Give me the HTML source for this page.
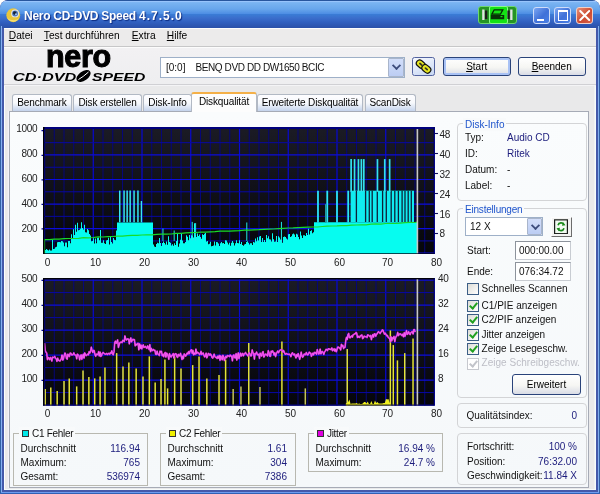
<!DOCTYPE html>
<html lang="de"><head><meta charset="utf-8"><title>Nero CD-DVD Speed 4.7.5.0</title>
<style>
*{box-sizing:border-box;margin:0;padding:0}
html,body{width:600px;height:494px;overflow:hidden;background:#fff}
body{position:relative;font-family:"Liberation Sans",sans-serif;font-size:10px;color:#111;}
#wrap{position:absolute;left:-4px;top:-4px;width:608px;height:502px;overflow:hidden;background:linear-gradient(180deg,#fff 0,#fff 14px,#3060a6 14px);filter:blur(0.4px)}
#stage{position:absolute;left:4px;top:4px;width:600px;height:494px}
.abs,.ch,.t,.al,.ar,.ax{position:absolute}
.t{white-space:nowrap;line-height:12px;height:12px}
/* window frame */
#frame{position:absolute;left:0;top:0;width:600px;height:494px;background:#4459aa;border-radius:8px 8px 0 0;overflow:hidden}
#title{position:absolute;left:0;top:0;width:600px;height:28px;border-radius:8px 8px 0 0;
 background:linear-gradient(180deg,#24508c 0,#2c5cb0 1px,#98c4fc 1.5px,#7ab4f2 2.6px,#68a6ec 9px,#4e8ee4 13.7px,#3a7cd6 14.3px,#3b6ecc 18px,#3060c0 22px,#2a50a8 28px);}
#title .cap{position:absolute;left:24px;top:8px;font:bold 12px/16px "Liberation Sans",sans-serif;color:#fff;text-shadow:1px 1px 1px #0a2a80;white-space:nowrap;letter-spacing:0.1px}
#client{position:absolute;left:3.8px;top:28px;width:592.3px;height:461.7px;background:#e9e9ea;box-shadow:inset 1px 0 0 #fbfefe,inset -1.5px -1px 0 #f6fbfb}
#menubar{position:absolute;left:0;top:0;width:592.3px;height:18px;background:#ecebeb;box-shadow:inset 0 1px 0 #fcfcfc}
#menubar span{position:absolute;top:2px;line-height:12px;font-size:10.2px;color:#000;white-space:nowrap}
#menubar u{text-decoration:underline}
#toolbar{position:absolute;left:0;top:19.3px;width:592.3px;height:37.6px;background:linear-gradient(180deg,#fcfcfc 0,#fcfcfc 1px,#f2f1f3 1.2px,#eeeef0 100%);border-bottom:1px solid #d0d0d4;box-shadow:0 1px 0 #f4f4f6}
.tbbtn{position:absolute;border-radius:3px;border:1px solid #2a437a;background:linear-gradient(180deg,#fff 0%,#f6f6f3 55%,#d9dce6 100%);text-align:center;font-size:10px;line-height:19px;color:#000}
.combo{position:absolute;background:#fff;border:1px solid #9eb0c8}
.combo .dd{position:absolute;right:0;top:0;bottom:0;width:15.5px;border-radius:1px;background:linear-gradient(180deg,#d2defa,#bccdf3);border:1px solid #a9b5cb}
.combo .dd:after{content:"";position:absolute;left:4px;top:3.2px;width:5px;height:5px;border-right:2px solid #3c4c7c;border-bottom:2px solid #3c4c7c;transform:rotate(45deg) scale(.92);transform-origin:center}
.tab{position:absolute;top:94px;height:17px;border:1px solid #b2b9c4;border-bottom:none;border-radius:3px 3px 0 0;background:linear-gradient(180deg,#fdfdff 0,#f7f9fc 50%,#c4d3ec 100%);font-size:10px;line-height:16px;text-align:center;white-space:nowrap;color:#000;letter-spacing:-0.13px}
.tab.sel{top:91.5px;height:20.5px;background:#fdfdfd;border-top:2.5px solid #f4b048;z-index:3;line-height:15px}
#page{position:absolute;left:8.9px;top:110.6px;width:580.5px;height:377.2px;border:1px solid #a6abb6;background:linear-gradient(180deg,#fafcfd,#f5f8fa);box-shadow:-1.2px 0 0 #f3f2fa}
.grp{position:absolute;border:1px solid #d3d4d6;border-radius:4px}
.gt{position:absolute;white-space:nowrap;line-height:13px;padding:0 2px;background:#f8fafb;color:#1f55cc;font-size:10px}
.al{font-size:10px;line-height:12px;width:29.3px;text-align:right;color:#222;letter-spacing:-0.3px}
.ar{font-size:10px;line-height:12px;text-align:left;color:#222;letter-spacing:-0.2px}
.ax{font-size:10px;line-height:12px;width:20px;text-align:center;color:#222}
.v{color:#1c1c7c}
.r{text-align:right}
.cb{position:absolute;width:12px;height:11.6px;border:1px solid #3c5e86;background:linear-gradient(135deg,#dcdcd7,#fff)}
.cb.on:after{content:"";position:absolute;left:3px;top:0px;width:3px;height:6px;border-right:2px solid #21a121;border-bottom:2px solid #21a121;transform:rotate(40deg)}
.cb.dis{border-color:#c6c8ce;background:#fff}
.cb.dis:after{border-color:#c2c4ca}
.edit{position:absolute;background:#fff;border:1px solid #8d939c;border-right-color:#c8ccd2;border-bottom-color:#c8ccd2;font-size:10px;line-height:17px;padding-left:3px;color:#111}
.sq{position:absolute;width:7px;height:7px;border:1px solid #333}
</style></head>
<body>
<div id="wrap"><div id="stage">
<div id="frame">
 <div id="title">
  <svg class="abs" style="left:6px;top:8px" width="14.5" height="14.5" viewBox="0 0 16 16"><circle cx="8" cy="8" r="7.6" fill="#e9c63a"/><path d="M1 10 A7.4 7.4 0 0 0 14.6 11 A8 6 0 0 1 1 10Z" fill="#f8e070"/><circle cx="10" cy="6" r="4.3" fill="#e8e8f0"/><circle cx="10" cy="6" r="3.3" fill="#5078b8"/><circle cx="9.6" cy="5.6" r="1.9" fill="#18243c"/><circle cx="11" cy="6.8" r="1" fill="#a8d0f8"/></svg>
  <div class="cap"><span style="letter-spacing:-0.28px">Nero CD-DVD Speed </span><span style="letter-spacing:1px">4.7.5.0</span></div>
  <!-- green tray tool -->
  <div class="abs" style="left:477.6px;top:6px;width:39px;height:17.5px;border-radius:3px;background:#259425;border:1px solid #6ed86e"></div>
  <div class="abs" style="left:489px;top:6px;width:18.5px;height:17.5px;border-radius:2px;background:#14e214;border:1px solid #8cf88c"></div>
  <svg class="abs" style="left:477.6px;top:6px" width="39" height="17.5" viewBox="0 0 39 17.5"><rect x="4.2" y="3.5" width="2.3" height="10.5" fill="#e4e4e4"/><rect x="7" y="4.5" width="2.3" height="8.5" fill="#1c1c1c"/><path d="M16.2 3.8h8.6l-2.4 4.4h-8.6z" fill="none" stroke="#062806" stroke-width="1.3"/><path d="M12.8 9h13.4v4.2h-13.4z" fill="#073407"/><rect x="22.5" y="10" width="2" height="1.2" fill="#14e214"/><rect x="32.2" y="3.5" width="2.3" height="10.5" fill="#e4e4e4"/><rect x="29.4" y="4.5" width="2.3" height="8.5" fill="#1c1c1c"/></svg>
  <!-- caption buttons -->
  <div class="abs" style="left:533.3px;top:6.5px;width:17.2px;height:17px;border-radius:3px;border:1px solid #cfdcf8;background:linear-gradient(135deg,#7aa6f2,#3f70d8 55%,#4a80e6)"><div class="abs" style="left:3px;top:11px;width:6.5px;height:2.4px;background:#fff"></div></div>
  <div class="abs" style="left:554.2px;top:6.5px;width:17.2px;height:17px;border-radius:3px;border:1px solid #cfdcf8;background:linear-gradient(135deg,#7aa6f2,#3f70d8 55%,#4a80e6)"><div class="abs" style="left:2.6px;top:2.3px;width:10.2px;height:10.8px;border:1px solid #fff;border-top-width:2.6px"></div></div>
  <div class="abs" style="left:575.5px;top:6.5px;width:17.4px;height:17px;border-radius:3px;border:1px solid #f0d0c8;background:linear-gradient(135deg,#e89078,#cc4a30 55%,#d86048)"><svg class="abs" style="left:0;top:0" width="15.4" height="15" viewBox="0 0 15.4 15"><path d="M3.2 3l9 9M12.2 3l-9 9" stroke="#fff" stroke-width="2" stroke-linecap="round"/></svg></div>
 </div>
 <div class="abs" style="left:0.7px;top:26px;width:1.4px;height:466px;background:#86b0f3"></div><div class="abs" style="left:0;top:26px;width:0.75px;height:468px;background:#3060a6"></div><div class="abs" style="left:597.8px;top:26px;width:1.4px;height:466px;background:#80acee"></div><div class="abs" style="left:599.2px;top:26px;width:0.8px;height:468px;background:#3060a2"></div><div class="abs" style="left:1px;top:491.7px;width:598px;height:1.6px;background:#6c9cf0"></div><div class="abs" style="left:0;top:493.3px;width:600px;height:0.7px;background:#3060b4"></div>
 <div id="client">
  <div id="menubar"><span style="left:5px"><u>D</u>atei</span><span style="left:40px"><u>T</u>est durchführen</span><span style="left:128px"><u>E</u>xtra</span><span style="left:163px"><u>H</u>ilfe</span></div>
  <div class="abs" style="left:0;top:18px;width:592.3px;height:1.3px;background:#c7c7c8"></div>
  <div id="toolbar"></div>
 </div>
</div>

<!-- logo -->
<div class="abs" style="left:45.6px;top:38px;font:bold 32px/36px 'Liberation Sans',sans-serif;color:#000;white-space:nowrap;transform-origin:0 0;transform:scaleX(0.953);-webkit-text-stroke:1.1px #000;letter-spacing:-0.3px">nero</div>
<div class="abs" style="left:12.6px;top:70.5px;font:italic bold 11px/12px 'Liberation Sans',sans-serif;color:#000;white-space:nowrap;transform-origin:0 0;transform:scaleX(1.48)">CD·DVD</div>
<svg class="abs" style="left:75px;top:69px" width="17" height="14" viewBox="0 0 17 14"><ellipse cx="8.5" cy="7" rx="8" ry="4.6" transform="rotate(-35 8.5 7)" fill="#000"/><path d="M3.5 10.5 Q8 8 13.5 3" stroke="#fff" stroke-width="1" fill="none"/></svg>
<div class="abs" style="left:91.5px;top:70.5px;font:italic bold 11px/12px 'Liberation Sans',sans-serif;color:#000;white-space:nowrap;transform-origin:0 0;transform:scaleX(1.43)">SPEED</div>

<!-- drive combo -->
<div class="combo" style="left:159.5px;top:57px;width:245px;height:21px"><div class="t" style="left:5.5px;top:3.5px">[0:0]</div><div class="t" style="left:35px;top:3.5px;letter-spacing:-0.4px">BENQ DVD DD DW1650 BCIC</div><div class="dd"></div></div>
<div class="tbbtn" style="left:412px;top:56.7px;width:23.3px;height:19.3px;border-radius:2.5px;border-color:#5363a0;background:linear-gradient(160deg,#f2f5fd 10%,#dfe8f9 50%,#c6d6f3 100%)"><svg class="abs" style="left:0;top:0" width="21.3" height="17.3" viewBox="0 0 21.3 17.3"><g transform="rotate(40 10.5 8.5)"><rect x="2.2" y="5.2" width="9.6" height="6.6" rx="3.3" fill="#e6e622" stroke="#111" stroke-width="1.2"/><rect x="5" y="7.6" width="4" height="1.8" rx="0.9" fill="#3a3a20"/><rect x="9.4" y="5.2" width="9.6" height="6.6" rx="3.3" fill="#e6e622" stroke="#111" stroke-width="1.2"/><rect x="12.2" y="7.6" width="4" height="1.8" rx="0.9" fill="#3a3a20"/></g></svg></div>
<div class="tbbtn" style="left:442.7px;top:57px;width:68px;height:19.4px;line-height:17px;box-shadow:inset 0 0 0 2px #a9c2f5"><u>S</u>tart</div>
<div class="tbbtn" style="left:517.8px;top:57px;width:67.8px;height:19.4px;line-height:17px"><u>B</u>eenden</div>

<!-- tabs -->
<div class="tab" style="left:12px;width:60px">Benchmark</div>
<div class="tab" style="left:73px;width:69px">Disk erstellen</div>
<div class="tab" style="left:143px;width:49px">Disk-Info</div>
<div class="tab sel" style="left:191px;width:66px">Diskqualität</div>
<div class="tab" style="left:257px;width:106px">Erweiterte Diskqualität</div>
<div class="tab" style="left:364.5px;width:51px">ScanDisk</div>
<div id="page"></div>

<!-- charts -->
<svg class="ch" style="left:43.0px;top:127.3px" width="391.5" height="127.10000000000001" viewBox="0 0 391.5 127.10000000000001">
<defs><linearGradient id="bg1" x1="0" y1="0" x2="0" y2="1"><stop offset="0" stop-color="#1b1b25"/><stop offset="1" stop-color="#05050a"/></linearGradient></defs>
<rect width="391.5" height="127.10000000000001" fill="url(#bg1)"/>
<line x1="1.50" y1="0" x2="1.50" y2="127.10000000000001" stroke="#0808d4" stroke-width="1.2"/><line x1="11.25" y1="0" x2="11.25" y2="127.10000000000001" stroke="#060678" stroke-width="1"/><line x1="21.00" y1="0" x2="21.00" y2="127.10000000000001" stroke="#060678" stroke-width="1"/><line x1="30.75" y1="0" x2="30.75" y2="127.10000000000001" stroke="#060678" stroke-width="1"/><line x1="40.50" y1="0" x2="40.50" y2="127.10000000000001" stroke="#060678" stroke-width="1"/><line x1="50.25" y1="0" x2="50.25" y2="127.10000000000001" stroke="#0808d4" stroke-width="1.2"/><line x1="60.00" y1="0" x2="60.00" y2="127.10000000000001" stroke="#060678" stroke-width="1"/><line x1="69.75" y1="0" x2="69.75" y2="127.10000000000001" stroke="#060678" stroke-width="1"/><line x1="79.50" y1="0" x2="79.50" y2="127.10000000000001" stroke="#060678" stroke-width="1"/><line x1="89.25" y1="0" x2="89.25" y2="127.10000000000001" stroke="#060678" stroke-width="1"/><line x1="99.00" y1="0" x2="99.00" y2="127.10000000000001" stroke="#0808d4" stroke-width="1.2"/><line x1="108.75" y1="0" x2="108.75" y2="127.10000000000001" stroke="#060678" stroke-width="1"/><line x1="118.50" y1="0" x2="118.50" y2="127.10000000000001" stroke="#060678" stroke-width="1"/><line x1="128.25" y1="0" x2="128.25" y2="127.10000000000001" stroke="#060678" stroke-width="1"/><line x1="138.00" y1="0" x2="138.00" y2="127.10000000000001" stroke="#060678" stroke-width="1"/><line x1="147.75" y1="0" x2="147.75" y2="127.10000000000001" stroke="#0808d4" stroke-width="1.2"/><line x1="157.50" y1="0" x2="157.50" y2="127.10000000000001" stroke="#060678" stroke-width="1"/><line x1="167.25" y1="0" x2="167.25" y2="127.10000000000001" stroke="#060678" stroke-width="1"/><line x1="177.00" y1="0" x2="177.00" y2="127.10000000000001" stroke="#060678" stroke-width="1"/><line x1="186.75" y1="0" x2="186.75" y2="127.10000000000001" stroke="#060678" stroke-width="1"/><line x1="196.50" y1="0" x2="196.50" y2="127.10000000000001" stroke="#0808d4" stroke-width="1.2"/><line x1="206.25" y1="0" x2="206.25" y2="127.10000000000001" stroke="#060678" stroke-width="1"/><line x1="216.00" y1="0" x2="216.00" y2="127.10000000000001" stroke="#060678" stroke-width="1"/><line x1="225.75" y1="0" x2="225.75" y2="127.10000000000001" stroke="#060678" stroke-width="1"/><line x1="235.50" y1="0" x2="235.50" y2="127.10000000000001" stroke="#060678" stroke-width="1"/><line x1="245.25" y1="0" x2="245.25" y2="127.10000000000001" stroke="#0808d4" stroke-width="1.2"/><line x1="255.00" y1="0" x2="255.00" y2="127.10000000000001" stroke="#060678" stroke-width="1"/><line x1="264.75" y1="0" x2="264.75" y2="127.10000000000001" stroke="#060678" stroke-width="1"/><line x1="274.50" y1="0" x2="274.50" y2="127.10000000000001" stroke="#060678" stroke-width="1"/><line x1="284.25" y1="0" x2="284.25" y2="127.10000000000001" stroke="#060678" stroke-width="1"/><line x1="294.00" y1="0" x2="294.00" y2="127.10000000000001" stroke="#0808d4" stroke-width="1.2"/><line x1="303.75" y1="0" x2="303.75" y2="127.10000000000001" stroke="#060678" stroke-width="1"/><line x1="313.50" y1="0" x2="313.50" y2="127.10000000000001" stroke="#060678" stroke-width="1"/><line x1="323.25" y1="0" x2="323.25" y2="127.10000000000001" stroke="#060678" stroke-width="1"/><line x1="333.00" y1="0" x2="333.00" y2="127.10000000000001" stroke="#060678" stroke-width="1"/><line x1="342.75" y1="0" x2="342.75" y2="127.10000000000001" stroke="#0808d4" stroke-width="1.2"/><line x1="352.50" y1="0" x2="352.50" y2="127.10000000000001" stroke="#060678" stroke-width="1"/><line x1="362.25" y1="0" x2="362.25" y2="127.10000000000001" stroke="#060678" stroke-width="1"/><line x1="372.00" y1="0" x2="372.00" y2="127.10000000000001" stroke="#060678" stroke-width="1"/><line x1="381.75" y1="0" x2="381.75" y2="127.10000000000001" stroke="#060678" stroke-width="1"/><line x1="391.50" y1="0" x2="391.50" y2="127.10000000000001" stroke="#0808d4" stroke-width="1.2"/><line x1="0" y1="126.20" x2="391.5" y2="126.20" stroke="#0c0cdc" stroke-width="1.2"/><line x1="0" y1="113.92" x2="391.5" y2="113.92" stroke="#0808a4" stroke-width="1"/><line x1="0" y1="101.64" x2="391.5" y2="101.64" stroke="#0c0cdc" stroke-width="1.2"/><line x1="0" y1="89.36" x2="391.5" y2="89.36" stroke="#0808a4" stroke-width="1"/><line x1="0" y1="77.08" x2="391.5" y2="77.08" stroke="#0c0cdc" stroke-width="1.2"/><line x1="0" y1="64.80" x2="391.5" y2="64.80" stroke="#0808a4" stroke-width="1"/><line x1="0" y1="52.52" x2="391.5" y2="52.52" stroke="#0c0cdc" stroke-width="1.2"/><line x1="0" y1="40.24" x2="391.5" y2="40.24" stroke="#0808a4" stroke-width="1"/><line x1="0" y1="27.96" x2="391.5" y2="27.96" stroke="#0c0cdc" stroke-width="1.2"/><line x1="0" y1="15.68" x2="391.5" y2="15.68" stroke="#0808a4" stroke-width="1"/>
<polygon fill="#06fcf0" points="0,127.10000000000001 0,126.2 1,126.2 1,126.2 2,126.2 2,122.9 3,122.9 3,122.0 4,122.0 4,122.8 5,122.8 5,123.4 6,123.4 6,122.6 7,122.6 7,123.6 8,123.6 8,123.6 9,123.6 9,112.9 10,112.9 10,122.0 11,122.0 11,121.8 12,121.8 12,120.2 13,120.2 13,119.8 14,119.8 14,115.3 15,115.3 15,115.1 16,115.1 16,115.1 17,115.1 17,115.3 18,115.3 18,113.9 19,113.9 19,114.3 20,114.3 20,115.6 21,115.6 21,119.3 22,119.3 22,115.4 23,115.4 23,115.4 24,115.4 24,120.3 25,120.3 25,114.1 26,114.1 26,114.0 27,114.0 27,116.2 28,116.2 28,107.3 29,107.3 29,111.5 30,111.5 30,102.2 31,102.2 31,107.9 32,107.9 32,97.8 33,97.8 33,104.7 34,104.7 34,95.7 35,95.7 35,103.3 36,103.3 36,102.8 37,102.8 37,101.7 38,101.7 38,95.2 39,95.2 39,101.1 40,101.1 40,102.5 41,102.5 41,97.7 42,97.7 42,105.2 43,105.2 43,105.5 44,105.5 44,102.1 45,102.1 45,103.2 46,103.2 46,106.9 47,106.9 47,108.5 48,108.5 48,114.3 49,114.3 49,114.0 50,114.0 50,111.2 51,111.2 51,116.5 52,116.5 52,111.6 53,111.6 53,116.2 54,116.2 54,110.7 55,110.7 55,110.6 56,110.6 56,113.2 57,113.2 57,103.1 58,103.1 58,115.8 59,115.8 59,115.7 60,115.7 60,113.2 61,113.2 61,116.3 62,116.3 62,117.1 63,117.1 63,113.5 64,113.5 64,113.1 65,113.1 65,110.8 66,110.8 66,117.5 67,117.5 67,108.9 68,108.9 68,114.9 69,114.9 69,116.6 70,116.6 70,111.0 71,111.0 71,112.8 72,112.8 72,113.3 73,113.3 73,103.5 74,103.5 74,95.5 75,95.5 75,95.5 76,95.5 76,95.5 77,95.5 77,95.5 78,95.5 78,95.5 79,95.5 79,95.5 80,95.5 80,95.5 81,95.5 81,95.5 82,95.5 82,95.5 83,95.5 83,95.5 84,95.5 84,95.5 85,95.5 85,95.5 86,95.5 86,95.5 87,95.5 87,95.5 88,95.5 88,95.5 89,95.5 89,95.5 90,95.5 90,95.5 91,95.5 91,95.5 92,95.5 92,95.5 93,95.5 93,95.5 94,95.5 94,95.5 95,95.5 95,95.5 96,95.5 96,95.5 97,95.5 97,95.5 98,95.5 98,95.5 99,95.5 99,95.5 100,95.5 100,95.5 101,95.5 101,95.5 102,95.5 102,95.5 103,95.5 103,95.5 104,95.5 104,95.5 105,95.5 105,95.5 106,95.5 106,95.5 107,95.5 107,95.5 108,95.5 108,95.5 109,95.5 109,95.5 110,95.5 110,117.4 111,117.4 111,119.5 112,119.5 112,119.9 113,119.9 113,117.1 114,117.1 114,115.8 115,115.8 115,116.3 116,116.3 116,111.1 117,111.1 117,115.9 118,115.9 118,119.0 119,119.0 119,116.0 120,116.0 120,114.6 121,114.6 121,116.0 122,116.0 122,117.4 123,117.4 123,114.4 124,114.4 124,117.7 125,117.7 125,109.3 126,109.3 126,114.9 127,114.9 127,115.7 128,115.7 128,118.4 129,118.4 129,117.3 130,117.3 130,118.7 131,118.7 131,116.2 132,116.2 132,118.1 133,118.1 133,114.0 134,114.0 134,105.9 135,105.9 135,119.8 136,119.8 136,116.6 137,116.6 137,112.7 138,112.7 138,106.3 139,106.3 139,113.5 140,113.5 140,116.2 141,116.2 141,116.2 142,116.2 142,115.1 143,115.1 143,108.3 144,108.3 144,109.8 145,109.8 145,113.2 146,113.2 146,108.0 147,108.0 147,111.3 148,111.3 148,108.2 149,108.2 149,108.8 150,108.8 150,110.4 151,110.4 151,96.2 152,96.2 152,108.0 153,108.0 153,110.0 154,110.0 154,106.6 155,106.6 155,109.1 156,109.1 156,107.4 157,107.4 157,109.9 158,109.9 158,111.8 159,111.8 159,107.3 160,107.3 160,108.0 161,108.0 161,106.7 162,106.7 162,106.1 163,106.1 163,114.6 164,114.6 164,113.9 165,113.9 165,117.3 166,117.3 166,116.7 167,116.7 167,114.7 168,114.7 168,119.3 169,119.3 169,119.1 170,119.1 170,118.4 171,118.4 171,114.6 172,114.6 172,118.5 173,118.5 173,115.0 174,115.0 174,115.2 175,115.2 175,116.4 176,116.4 176,118.9 177,118.9 177,116.2 178,116.2 178,115.0 179,115.0 179,116.2 180,116.2 180,116.0 181,116.0 181,117.1 182,117.1 182,113.3 183,113.3 183,113.6 184,113.6 184,115.6 185,115.6 185,117.6 186,117.6 186,115.7 187,115.7 187,118.7 188,118.7 188,115.7 189,115.7 189,113.9 190,113.9 190,115.8 191,115.8 191,118.4 192,118.4 192,116.3 193,116.3 193,113.2 194,113.2 194,115.9 195,115.9 195,116.2 196,116.2 196,113.3 197,113.3 197,116.9 198,116.9 198,115.0 199,115.0 199,118.0 200,118.0 200,118.7 201,118.7 201,117.4 202,117.4 202,116.9 203,116.9 203,115.0 204,115.0 204,114.3 205,114.3 205,115.7 206,115.7 206,117.6 207,117.6 207,116.2 208,116.2 208,116.3 209,116.3 209,117.9 210,117.9 210,115.0 211,115.0 211,115.6 212,115.6 212,111.6 213,111.6 213,114.2 214,114.2 214,110.3 215,110.3 215,113.6 216,113.6 216,109.5 217,109.5 217,109.0 218,109.0 218,114.9 219,114.9 219,110.9 220,110.9 220,115.1 221,115.1 221,112.9 222,112.9 222,114.9 223,114.9 223,108.0 224,108.0 224,111.2 225,111.2 225,109.2 226,109.2 226,112.3 227,112.3 227,112.4 228,112.4 228,114.5 229,114.5 229,106.3 230,106.3 230,112.3 231,112.3 231,114.8 232,114.8 232,114.4 233,114.4 233,109.1 234,109.1 234,115.1 235,115.1 235,109.3 236,109.3 236,110.6 237,110.6 237,112.6 238,112.6 238,112.9 239,112.9 239,115.7 240,115.7 240,110.1 241,110.1 241,109.6 242,109.6 242,110.0 243,110.0 243,111.6 244,111.6 244,112.6 245,112.6 245,107.3 246,107.3 246,106.9 247,106.9 247,110.0 248,110.0 248,109.3 249,109.3 249,107.3 250,107.3 250,106.5 251,106.5 251,107.4 252,107.4 252,110.0 253,110.0 253,106.7 254,106.7 254,107.5 255,107.5 255,110.0 256,110.0 256,112.2 257,112.2 257,104.4 258,104.4 258,108.4 259,108.4 259,111.1 260,111.1 260,108.2 261,108.2 261,108.2 262,108.2 262,109.1 263,109.1 263,105.9 264,105.9 264,108.0 265,108.0 265,101.8 266,101.8 266,107.6 267,107.6 267,104.0 268,104.0 268,103.2 269,103.2 269,106.2 270,106.2 270,105.3 271,105.3 271,95.3 272,95.3 272,95.3 273,95.3 273,95.3 274,95.3 274,95.3 275,95.3 275,95.3 276,95.3 276,95.3 277,95.3 277,95.3 278,95.3 278,95.3 279,95.3 279,95.3 280,95.3 280,95.3 281,95.3 281,95.3 282,95.3 282,95.3 283,95.3 283,95.3 284,95.3 284,95.3 285,95.3 285,95.3 286,95.3 286,95.3 287,95.3 287,95.3 288,95.3 288,95.3 289,95.3 289,95.3 290,95.3 290,95.3 291,95.3 291,95.3 292,95.3 292,95.3 293,95.3 293,95.3 294,95.3 294,95.3 295,95.3 295,95.3 296,95.3 296,95.3 297,95.3 297,95.3 298,95.3 298,95.3 299,95.3 299,95.3 300,95.3 300,95.3 301,95.3 301,95.3 302,95.3 302,95.3 303,95.3 303,95.3 304,95.3 304,95.3 305,95.3 305,95.3 306,95.3 306,95.3 307,95.3 307,95.3 308,95.3 308,95.3 309,95.3 309,95.3 310,95.3 310,95.3 311,95.3 311,95.3 312,95.3 312,95.3 313,95.3 313,95.3 314,95.3 314,95.3 315,95.3 315,95.3 316,95.3 316,95.3 317,95.3 317,95.3 318,95.3 318,95.3 319,95.3 319,95.3 320,95.3 320,95.3 321,95.3 321,95.3 322,95.3 322,95.3 323,95.3 323,95.3 324,95.3 324,95.3 325,95.3 325,95.3 326,95.3 326,95.3 327,95.3 327,95.3 328,95.3 328,95.3 329,95.3 329,95.3 330,95.3 330,95.3 331,95.3 331,95.3 332,95.3 332,95.3 333,95.3 333,95.3 334,95.3 334,95.3 335,95.3 335,95.3 336,95.3 336,95.3 337,95.3 337,95.3 338,95.3 338,95.3 339,95.3 339,95.3 340,95.3 340,95.3 341,95.3 341,95.3 342,95.3 342,95.3 343,95.3 343,95.3 344,95.3 344,95.3 345,95.3 345,95.3 346,95.3 346,95.3 347,95.3 347,95.3 348,95.3 348,95.3 349,95.3 349,95.3 350,95.3 350,95.3 351,95.3 351,95.3 352,95.3 352,95.3 353,95.3 353,95.3 354,95.3 354,95.3 355,95.3 355,95.3 356,95.3 356,95.3 357,95.3 357,95.3 358,95.3 358,95.3 359,95.3 359,95.3 360,95.3 360,95.3 361,95.3 361,95.3 362,95.3 362,95.3 363,95.3 363,95.3 364,95.3 364,95.3 365,95.3 365,95.3 366,95.3 366,95.3 367,95.3 367,95.3 368,95.3 368,95.3 369,95.3 369,95.3 370,95.3 370,95.3 371,95.3 371,95.3 372,95.3 372,95.3 373,95.3 373,95.3 374,95.3 374,127.10000000000001"/>
<line x1="76.72" y1="63.6" x2="76.72" y2="95.3" stroke="#38e6f2" stroke-width="1.5"/><line x1="81.06" y1="63.6" x2="81.06" y2="95.3" stroke="#38e6f2" stroke-width="1.5"/><line x1="84.13" y1="63.6" x2="84.13" y2="95.3" stroke="#38e6f2" stroke-width="1.5"/><line x1="87.15" y1="63.6" x2="87.15" y2="95.3" stroke="#38e6f2" stroke-width="1.5"/><line x1="91.05" y1="63.6" x2="91.05" y2="95.3" stroke="#38e6f2" stroke-width="1.5"/><line x1="94.95" y1="63.6" x2="94.95" y2="95.3" stroke="#38e6f2" stroke-width="1.5"/><line x1="98.41" y1="74.0" x2="98.41" y2="95.3" stroke="#38e6f2" stroke-width="1.4"/><line x1="203.81" y1="95.5" x2="203.81" y2="113.9" stroke="#20ecec" stroke-width="1.0"/><line x1="238.43" y1="94.9" x2="238.43" y2="113.9" stroke="#20ecec" stroke-width="1.0"/><line x1="149.21" y1="94.9" x2="149.21" y2="113.9" stroke="#20ecec" stroke-width="1.0"/><line x1="152.62" y1="96.1" x2="152.62" y2="113.9" stroke="#20ecec" stroke-width="1.0"/><line x1="119.96" y1="101.6" x2="119.96" y2="113.9" stroke="#20ecec" stroke-width="1.0"/><line x1="131.18" y1="103.5" x2="131.18" y2="113.9" stroke="#20ecec" stroke-width="1.0"/><line x1="274.99" y1="63.7" x2="274.99" y2="95.5" stroke="#2ce6f4" stroke-width="1.8"/><line x1="284.25" y1="63.7" x2="284.25" y2="95.5" stroke="#2ce6f4" stroke-width="1.8"/><line x1="294.00" y1="63.7" x2="294.00" y2="95.5" stroke="#2ce6f4" stroke-width="1.8"/><line x1="305.21" y1="63.7" x2="305.21" y2="95.5" stroke="#2ce6f4" stroke-width="1.8"/><line x1="282.79" y1="77.1" x2="282.79" y2="95.5" stroke="#209aa0" stroke-width="1.6"/><rect x="307.6" y="63.7" width="63.4" height="31.6" fill="#10ecf0"/><line x1="313.4" y1="63.7" x2="313.4" y2="95.0" stroke="#0c2038" stroke-width="1.3"/><line x1="322.6" y1="63.7" x2="322.6" y2="95.0" stroke="#0c2038" stroke-width="1.3"/><line x1="326.3" y1="63.7" x2="326.3" y2="95.0" stroke="#0c2038" stroke-width="1.3"/><line x1="329.2" y1="63.7" x2="329.2" y2="95.0" stroke="#0c2038" stroke-width="1.3"/><line x1="334.3" y1="63.7" x2="334.3" y2="95.0" stroke="#0c2038" stroke-width="1.3"/><line x1="339.6" y1="63.7" x2="339.6" y2="95.0" stroke="#0c2038" stroke-width="1.3"/><line x1="343.3" y1="63.7" x2="343.3" y2="95.0" stroke="#0c2038" stroke-width="1.3"/><line x1="348.2" y1="63.7" x2="348.2" y2="95.0" stroke="#0c2038" stroke-width="1.3"/><line x1="351.8" y1="63.7" x2="351.8" y2="95.0" stroke="#0c2038" stroke-width="1.3"/><line x1="355.4" y1="63.7" x2="355.4" y2="95.0" stroke="#0c2038" stroke-width="1.3"/><line x1="359.1" y1="63.7" x2="359.1" y2="95.0" stroke="#0c2038" stroke-width="1.3"/><line x1="362.0" y1="63.7" x2="362.0" y2="95.0" stroke="#0c2038" stroke-width="1.3"/><line x1="365.2" y1="63.7" x2="365.2" y2="95.0" stroke="#0c2038" stroke-width="1.3"/><line x1="368.3" y1="63.7" x2="368.3" y2="95.0" stroke="#0c2038" stroke-width="1.3"/><line x1="308.14" y1="32.1" x2="308.14" y2="64.8" stroke="#34e2ee" stroke-width="1.7"/><line x1="311.55" y1="32.1" x2="311.55" y2="64.8" stroke="#34e2ee" stroke-width="1.7"/><line x1="315.45" y1="32.1" x2="315.45" y2="64.8" stroke="#34e2ee" stroke-width="1.7"/><line x1="318.38" y1="32.1" x2="318.38" y2="64.8" stroke="#34e2ee" stroke-width="1.7"/><line x1="320.81" y1="32.1" x2="320.81" y2="64.8" stroke="#34e2ee" stroke-width="1.7"/><line x1="334.46" y1="32.1" x2="334.46" y2="64.8" stroke="#34e2ee" stroke-width="1.7"/><line x1="341.77" y1="32.1" x2="341.77" y2="64.8" stroke="#34e2ee" stroke-width="1.7"/><line x1="346.65" y1="32.1" x2="346.65" y2="64.8" stroke="#34e2ee" stroke-width="1.7"/>
<polyline fill="none" stroke="#18dc28" stroke-width="1.2" points="1.5,127.10000000000001 1.5,112.7 6.4,112.6 11.2,112.2 16.1,112.1 21.0,111.7 25.9,111.5 30.8,111.5 35.6,111.3 40.5,110.7 45.4,110.8 50.2,110.5 55.1,109.9 60.0,110.0 64.9,109.6 69.8,109.5 74.6,109.2 79.5,109.2 84.4,108.7 89.2,108.4 94.1,108.3 99.0,108.0 103.9,107.8 108.8,107.9 113.6,107.3 118.5,107.2 123.4,107.1 128.2,107.0 133.1,106.3 138.0,106.3 142.9,105.9 147.8,105.6 152.6,105.5 157.5,105.2 162.4,105.2 167.2,104.8 172.1,104.7 177.0,104.2 181.9,104.0 186.8,104.2 191.6,103.9 196.5,103.7 201.4,103.1 206.2,103.1 211.1,102.8 216.0,102.7 220.9,102.4 225.8,102.2 230.6,102.0 235.5,101.7 240.4,101.4 245.2,101.0 250.1,100.9 255.0,100.6 259.9,100.4 264.8,100.1 269.6,100.0 274.5,100.0 279.4,99.5 284.2,99.2 289.1,99.0 294.0,98.9 298.9,98.6 303.8,98.6 308.6,98.1 313.5,98.0 318.4,97.9 323.2,97.8 328.1,97.2 333.0,96.9 337.9,97.1 342.8,96.5 347.6,96.5 352.5,96.4 357.4,96.1 362.2,95.6 367.1,95.3 372.0,95.5 374.0,95.2"/>
<line x1="374.4" y1="0" x2="374.4" y2="127.10000000000001" stroke="#c8c8c8" stroke-width="1.6"/>
<rect x="0" y="0" width="391.5" height="2" fill="#00007c"/><rect x="0" y="0" width="1.5" height="127.10000000000001" fill="#000008"/><rect x="0" y="126.30000000000001" width="391.5" height="0.8" fill="#000010"/><rect x="390.7" y="0" width="0.8" height="127.10000000000001" fill="#000040"/>
</svg>
<svg class="ch" style="left:43.0px;top:278.2px" width="391.5" height="127.40000000000003" viewBox="0 0 391.5 127.40000000000003">
<rect width="391.5" height="127.40000000000003" fill="url(#bg1)"/>
<line x1="1.50" y1="0" x2="1.50" y2="127.40000000000003" stroke="#0808d4" stroke-width="1.2"/><line x1="11.25" y1="0" x2="11.25" y2="127.40000000000003" stroke="#060678" stroke-width="1"/><line x1="21.00" y1="0" x2="21.00" y2="127.40000000000003" stroke="#060678" stroke-width="1"/><line x1="30.75" y1="0" x2="30.75" y2="127.40000000000003" stroke="#060678" stroke-width="1"/><line x1="40.50" y1="0" x2="40.50" y2="127.40000000000003" stroke="#060678" stroke-width="1"/><line x1="50.25" y1="0" x2="50.25" y2="127.40000000000003" stroke="#0808d4" stroke-width="1.2"/><line x1="60.00" y1="0" x2="60.00" y2="127.40000000000003" stroke="#060678" stroke-width="1"/><line x1="69.75" y1="0" x2="69.75" y2="127.40000000000003" stroke="#060678" stroke-width="1"/><line x1="79.50" y1="0" x2="79.50" y2="127.40000000000003" stroke="#060678" stroke-width="1"/><line x1="89.25" y1="0" x2="89.25" y2="127.40000000000003" stroke="#060678" stroke-width="1"/><line x1="99.00" y1="0" x2="99.00" y2="127.40000000000003" stroke="#0808d4" stroke-width="1.2"/><line x1="108.75" y1="0" x2="108.75" y2="127.40000000000003" stroke="#060678" stroke-width="1"/><line x1="118.50" y1="0" x2="118.50" y2="127.40000000000003" stroke="#060678" stroke-width="1"/><line x1="128.25" y1="0" x2="128.25" y2="127.40000000000003" stroke="#060678" stroke-width="1"/><line x1="138.00" y1="0" x2="138.00" y2="127.40000000000003" stroke="#060678" stroke-width="1"/><line x1="147.75" y1="0" x2="147.75" y2="127.40000000000003" stroke="#0808d4" stroke-width="1.2"/><line x1="157.50" y1="0" x2="157.50" y2="127.40000000000003" stroke="#060678" stroke-width="1"/><line x1="167.25" y1="0" x2="167.25" y2="127.40000000000003" stroke="#060678" stroke-width="1"/><line x1="177.00" y1="0" x2="177.00" y2="127.40000000000003" stroke="#060678" stroke-width="1"/><line x1="186.75" y1="0" x2="186.75" y2="127.40000000000003" stroke="#060678" stroke-width="1"/><line x1="196.50" y1="0" x2="196.50" y2="127.40000000000003" stroke="#0808d4" stroke-width="1.2"/><line x1="206.25" y1="0" x2="206.25" y2="127.40000000000003" stroke="#060678" stroke-width="1"/><line x1="216.00" y1="0" x2="216.00" y2="127.40000000000003" stroke="#060678" stroke-width="1"/><line x1="225.75" y1="0" x2="225.75" y2="127.40000000000003" stroke="#060678" stroke-width="1"/><line x1="235.50" y1="0" x2="235.50" y2="127.40000000000003" stroke="#060678" stroke-width="1"/><line x1="245.25" y1="0" x2="245.25" y2="127.40000000000003" stroke="#0808d4" stroke-width="1.2"/><line x1="255.00" y1="0" x2="255.00" y2="127.40000000000003" stroke="#060678" stroke-width="1"/><line x1="264.75" y1="0" x2="264.75" y2="127.40000000000003" stroke="#060678" stroke-width="1"/><line x1="274.50" y1="0" x2="274.50" y2="127.40000000000003" stroke="#060678" stroke-width="1"/><line x1="284.25" y1="0" x2="284.25" y2="127.40000000000003" stroke="#060678" stroke-width="1"/><line x1="294.00" y1="0" x2="294.00" y2="127.40000000000003" stroke="#0808d4" stroke-width="1.2"/><line x1="303.75" y1="0" x2="303.75" y2="127.40000000000003" stroke="#060678" stroke-width="1"/><line x1="313.50" y1="0" x2="313.50" y2="127.40000000000003" stroke="#060678" stroke-width="1"/><line x1="323.25" y1="0" x2="323.25" y2="127.40000000000003" stroke="#060678" stroke-width="1"/><line x1="333.00" y1="0" x2="333.00" y2="127.40000000000003" stroke="#060678" stroke-width="1"/><line x1="342.75" y1="0" x2="342.75" y2="127.40000000000003" stroke="#0808d4" stroke-width="1.2"/><line x1="352.50" y1="0" x2="352.50" y2="127.40000000000003" stroke="#060678" stroke-width="1"/><line x1="362.25" y1="0" x2="362.25" y2="127.40000000000003" stroke="#060678" stroke-width="1"/><line x1="372.00" y1="0" x2="372.00" y2="127.40000000000003" stroke="#060678" stroke-width="1"/><line x1="381.75" y1="0" x2="381.75" y2="127.40000000000003" stroke="#060678" stroke-width="1"/><line x1="391.50" y1="0" x2="391.50" y2="127.40000000000003" stroke="#0808d4" stroke-width="1.2"/><line x1="0" y1="127.10" x2="391.5" y2="127.10" stroke="#0c0cdc" stroke-width="1.2"/><line x1="0" y1="114.60" x2="391.5" y2="114.60" stroke="#0808a4" stroke-width="1"/><line x1="0" y1="102.10" x2="391.5" y2="102.10" stroke="#0c0cdc" stroke-width="1.2"/><line x1="0" y1="89.60" x2="391.5" y2="89.60" stroke="#0808a4" stroke-width="1"/><line x1="0" y1="77.10" x2="391.5" y2="77.10" stroke="#0c0cdc" stroke-width="1.2"/><line x1="0" y1="64.60" x2="391.5" y2="64.60" stroke="#0808a4" stroke-width="1"/><line x1="0" y1="52.10" x2="391.5" y2="52.10" stroke="#0c0cdc" stroke-width="1.2"/><line x1="0" y1="39.60" x2="391.5" y2="39.60" stroke="#0808a4" stroke-width="1"/><line x1="0" y1="27.10" x2="391.5" y2="27.10" stroke="#0c0cdc" stroke-width="1.2"/><line x1="0" y1="14.60" x2="391.5" y2="14.60" stroke="#0808a4" stroke-width="1"/><line x1="0" y1="2.10" x2="391.5" y2="2.10" stroke="#0c0cdc" stroke-width="1.2"/>
<line x1="2.18" y1="111.1" x2="2.18" y2="127.40000000000003" stroke="#e4e438" stroke-width="1.5"/><line x1="7.79" y1="109.6" x2="7.79" y2="127.40000000000003" stroke="#e4e438" stroke-width="1.5"/><line x1="14.17" y1="113.1" x2="14.17" y2="127.40000000000003" stroke="#e4e438" stroke-width="1.5"/><line x1="21.00" y1="103.1" x2="21.00" y2="127.40000000000003" stroke="#e4e438" stroke-width="1.5"/><line x1="26.22" y1="100.4" x2="26.22" y2="127.40000000000003" stroke="#e4e438" stroke-width="1.5"/><line x1="33.67" y1="108.4" x2="33.67" y2="127.40000000000003" stroke="#e4e438" stroke-width="1.5"/><line x1="40.01" y1="92.4" x2="40.01" y2="127.40000000000003" stroke="#e4e438" stroke-width="1.5"/><line x1="45.86" y1="99.1" x2="45.86" y2="127.40000000000003" stroke="#e4e438" stroke-width="1.5"/><line x1="51.71" y1="100.4" x2="51.71" y2="127.40000000000003" stroke="#e4e438" stroke-width="1.5"/><line x1="57.08" y1="98.4" x2="57.08" y2="127.40000000000003" stroke="#e4e438" stroke-width="1.5"/><line x1="61.95" y1="89.6" x2="61.95" y2="127.40000000000003" stroke="#e4e438" stroke-width="1.5"/><line x1="73.65" y1="75.1" x2="73.65" y2="127.40000000000003" stroke="#e4e438" stroke-width="1.5"/><line x1="79.99" y1="88.4" x2="79.99" y2="127.40000000000003" stroke="#e4e438" stroke-width="1.5"/><line x1="85.84" y1="84.4" x2="85.84" y2="127.40000000000003" stroke="#e4e438" stroke-width="1.5"/><line x1="93.15" y1="90.4" x2="93.15" y2="127.40000000000003" stroke="#e4e438" stroke-width="1.5"/><line x1="99.97" y1="98.4" x2="99.97" y2="127.40000000000003" stroke="#e4e438" stroke-width="1.5"/><line x1="106.31" y1="78.4" x2="106.31" y2="127.40000000000003" stroke="#e4e438" stroke-width="1.5"/><line x1="112.16" y1="104.4" x2="112.16" y2="127.40000000000003" stroke="#e4e438" stroke-width="1.5"/><line x1="118.01" y1="101.1" x2="118.01" y2="127.40000000000003" stroke="#e4e438" stroke-width="1.5"/><line x1="121.91" y1="81.6" x2="121.91" y2="127.40000000000003" stroke="#e4e438" stroke-width="1.5"/><line x1="124.59" y1="110.4" x2="124.59" y2="127.40000000000003" stroke="#e4e438" stroke-width="1.5"/><line x1="131.66" y1="78.4" x2="131.66" y2="127.40000000000003" stroke="#e4e438" stroke-width="1.5"/><line x1="138.00" y1="90.4" x2="138.00" y2="127.40000000000003" stroke="#e4e438" stroke-width="1.5"/><line x1="149.70" y1="87.1" x2="149.70" y2="127.40000000000003" stroke="#e4e438" stroke-width="1.5"/><line x1="156.04" y1="78.4" x2="156.04" y2="127.40000000000003" stroke="#e4e438" stroke-width="1.5"/><line x1="163.84" y1="100.4" x2="163.84" y2="127.40000000000003" stroke="#e4e438" stroke-width="1.5"/><line x1="176.02" y1="97.1" x2="176.02" y2="127.40000000000003" stroke="#e4e438" stroke-width="1.5"/><line x1="182.61" y1="81.6" x2="182.61" y2="127.40000000000003" stroke="#e4e438" stroke-width="1.5"/><line x1="190.16" y1="111.1" x2="190.16" y2="127.40000000000003" stroke="#c4c458" stroke-width="1.5"/><line x1="197.96" y1="108.4" x2="197.96" y2="127.40000000000003" stroke="#c4c458" stroke-width="1.5"/><line x1="205.76" y1="65.1" x2="205.76" y2="127.40000000000003" stroke="#e4e438" stroke-width="1.5"/><line x1="216.98" y1="109.1" x2="216.98" y2="127.40000000000003" stroke="#c4c458" stroke-width="1.5"/><line x1="238.91" y1="63.6" x2="238.91" y2="127.40000000000003" stroke="#e4e438" stroke-width="1.5"/><line x1="262.31" y1="110.4" x2="262.31" y2="127.40000000000003" stroke="#c4c458" stroke-width="1.5"/><line x1="304.24" y1="71.1" x2="304.24" y2="127.40000000000003" stroke="#e4e438" stroke-width="1.5"/><line x1="347.38" y1="52.4" x2="347.38" y2="127.40000000000003" stroke="#e4e438" stroke-width="1.5"/><line x1="350.31" y1="67.1" x2="350.31" y2="127.40000000000003" stroke="#e4e438" stroke-width="1.5"/><line x1="354.45" y1="82.4" x2="354.45" y2="127.40000000000003" stroke="#e4e438" stroke-width="1.5"/><line x1="361.76" y1="75.1" x2="361.76" y2="127.40000000000003" stroke="#e4e438" stroke-width="1.5"/><line x1="370.05" y1="60.4" x2="370.05" y2="127.40000000000003" stroke="#e4e438" stroke-width="1.5"/><polygon fill="#f0f020" points="302.8,127.40000000000003 302.8,125.6 304.0,125.1 305.2,124.1 306.4,121.6 307.6,126.1 308.9,125.6 310.1,125.6 311.3,125.6 312.5,125.6 313.7,125.1 315.0,126.1 316.2,125.6 317.4,125.9 318.6,126.1 319.8,125.6 321.1,124.1 322.3,124.1 323.5,125.6 324.7,123.6 325.9,126.1 327.1,125.9 328.4,123.1 329.6,126.1 330.8,126.1 332.0,122.6 333.2,125.1 334.5,124.1 335.7,125.6 336.9,125.6 338.1,125.6 339.3,125.6 340.6,125.1 341.8,125.1 343.0,121.1 344.2,121.6 345.4,121.1 346.6,124.6 347.9,125.9 348.6,127.40000000000003"/>
<polyline fill="none" stroke="#dc28dc" stroke-width="1.7" stroke-linejoin="round" points="1.5,65.1 2.2,72.6 3.0,74.2 3.7,75.1 4.4,81.6 5.2,79.5 5.9,79.9 6.6,81.7 7.4,79.5 8.1,80.6 8.8,83.1 9.5,79.2 10.3,79.6 11.0,79.2 11.7,78.4 12.5,80.4 13.2,80.9 13.9,83.4 14.7,80.2 15.4,82.4 16.1,82.3 16.9,83.1 17.6,82.0 18.3,80.7 19.0,77.0 19.8,82.2 20.5,80.6 21.2,77.3 22.0,75.0 22.7,76.3 23.4,80.4 24.2,81.2 24.9,76.1 25.6,77.8 26.4,78.5 27.1,75.1 27.8,75.0 28.6,76.8 29.3,76.8 30.0,76.7 30.8,74.8 31.5,76.7 32.2,77.0 32.9,77.1 33.7,80.9 34.4,76.2 35.1,76.9 35.9,77.7 36.6,81.9 37.3,79.5 38.1,76.8 38.8,81.3 39.5,78.4 40.3,76.2 41.0,80.1 41.7,74.9 42.5,76.6 43.2,77.7 43.9,76.8 44.6,76.1 45.4,76.9 46.1,73.6 46.8,75.1 47.6,73.1 48.3,69.1 49.0,71.9 49.8,74.5 50.5,72.4 51.2,72.6 52.0,76.6 52.7,78.3 53.4,76.2 54.2,76.3 54.9,76.6 55.6,73.7 56.3,78.0 57.1,74.1 57.8,78.5 58.5,77.7 59.3,75.3 60.0,74.5 60.7,75.0 61.5,75.8 62.2,76.2 62.9,76.1 63.7,75.4 64.4,76.6 65.1,75.8 65.9,75.3 66.6,76.3 67.3,74.9 68.0,75.3 68.8,72.8 69.5,75.6 70.2,76.9 71.0,73.9 71.7,64.6 72.4,63.1 73.2,65.3 73.9,64.2 74.6,61.8 75.4,69.4 76.1,67.0 76.8,64.8 77.6,64.2 78.3,64.0 79.0,64.7 79.7,62.4 80.5,62.6 81.2,63.5 81.9,57.9 82.7,61.0 83.4,62.1 84.1,60.9 84.9,61.1 85.6,61.0 86.3,65.9 87.1,62.2 87.8,59.9 88.5,63.9 89.3,62.2 90.0,61.2 90.7,62.0 91.4,61.6 92.2,67.8 92.9,66.2 93.6,66.9 94.4,65.8 95.1,65.3 95.8,72.0 96.6,65.8 97.3,70.4 98.0,67.0 98.8,71.0 99.5,68.4 100.2,66.9 100.9,69.5 101.7,69.1 102.4,68.3 103.1,69.7 103.9,70.4 104.6,67.9 105.3,69.0 106.1,71.6 106.8,66.6 107.5,73.6 108.3,70.3 109.0,72.7 109.7,72.2 110.5,71.5 111.2,72.7 111.9,72.2 112.6,76.2 113.4,76.5 114.1,73.1 114.8,76.1 115.6,76.5 116.3,77.5 117.0,73.1 117.8,74.3 118.5,73.3 119.2,77.7 120.0,76.4 120.7,78.7 121.4,75.7 122.2,74.5 122.9,79.1 123.6,75.1 124.3,76.1 125.1,78.1 125.8,81.3 126.5,75.5 127.3,78.1 128.0,79.1 128.7,77.4 129.5,77.4 130.2,75.6 130.9,80.0 131.7,76.3 132.4,75.7 133.1,75.9 133.9,78.6 134.6,79.4 135.3,76.3 136.0,77.8 136.8,77.7 137.5,75.3 138.2,78.1 139.0,81.5 139.7,78.2 140.4,80.6 141.2,75.9 141.9,76.7 142.6,78.2 143.4,76.9 144.1,75.1 144.8,76.1 145.6,73.6 146.3,75.7 147.0,73.5 147.7,72.3 148.5,71.8 149.2,75.4 149.9,72.4 150.7,76.8 151.4,75.1 152.1,76.3 152.9,71.1 153.6,75.6 154.3,74.1 155.1,74.9 155.8,75.2 156.5,76.7 157.3,75.9 158.0,73.4 158.7,76.5 159.4,75.7 160.2,75.0 160.9,77.1 161.6,79.0 162.4,77.8 163.1,75.1 163.8,79.8 164.6,78.1 165.3,75.4 166.0,75.8 166.8,77.3 167.5,75.9 168.2,77.1 169.0,79.5 169.7,80.2 170.4,78.7 171.1,76.1 171.9,78.7 172.6,79.3 173.3,79.2 174.1,80.6 174.8,78.2 175.5,80.1 176.3,77.5 177.0,82.3 177.7,77.8 178.5,79.5 179.2,81.8 179.9,77.3 180.7,79.1 181.4,82.5 182.1,80.3 182.8,78.4 183.6,79.7 184.3,77.7 185.0,77.8 185.8,78.0 186.5,78.7 187.2,77.0 188.0,78.1 188.7,78.4 189.4,82.8 190.2,77.6 190.9,76.9 191.6,79.6 192.4,79.9 193.1,75.7 193.8,82.1 194.5,78.2 195.3,74.8 196.0,80.6 196.7,77.6 197.5,75.1 198.2,78.1 198.9,76.4 199.7,75.4 200.4,78.0 201.1,76.2 201.9,75.4 202.6,74.5 203.3,76.1 204.1,76.4 204.8,77.9 205.5,76.8 206.2,74.7 207.0,76.2 207.7,77.9 208.4,77.9 209.2,71.9 209.9,74.6 210.6,75.5 211.4,81.2 212.1,75.7 212.8,76.0 213.6,74.0 214.3,76.2 215.0,77.1 215.8,76.2 216.5,80.4 217.2,75.2 217.9,76.4 218.7,78.1 219.4,74.5 220.1,73.6 220.9,79.1 221.6,77.8 222.3,76.1 223.1,76.2 223.8,77.1 224.5,78.0 225.3,72.7 226.0,74.5 226.7,78.2 227.5,78.4 228.2,73.1 228.9,74.3 229.6,72.8 230.4,74.5 231.1,77.1 231.8,74.8 232.6,78.6 233.3,75.9 234.0,74.3 234.8,73.0 235.5,74.8 236.2,73.4 237.0,72.1 237.7,71.9 238.4,71.6 239.2,72.7 239.9,74.1 240.6,72.5 241.3,74.2 242.1,76.1 242.8,76.2 243.5,75.5 244.3,76.1 245.0,76.1 245.7,76.5 246.5,76.2 247.2,76.8 247.9,78.7 248.7,75.9 249.4,74.8 250.1,75.9 250.9,77.0 251.6,75.9 252.3,78.4 253.0,80.0 253.8,76.6 254.5,78.4 255.2,75.5 256.0,78.7 256.7,81.4 257.4,78.7 258.2,74.2 258.9,77.6 259.6,79.3 260.4,78.3 261.1,76.1 261.8,76.2 262.6,76.7 263.3,74.5 264.0,75.9 264.7,77.1 265.5,76.0 266.2,74.1 266.9,75.1 267.7,75.0 268.4,78.5 269.1,76.8 269.9,75.2 270.6,76.9 271.3,74.4 272.1,75.1 272.8,74.5 273.5,76.3 274.3,71.5 275.0,73.7 275.7,76.1 276.4,75.4 277.2,71.0 277.9,76.0 278.6,73.8 279.4,73.5 280.1,74.8 280.8,76.5 281.6,73.8 282.3,73.1 283.0,71.4 283.8,71.6 284.5,72.6 285.2,70.8 286.0,70.9 286.7,71.1 287.4,71.3 288.1,71.6 288.9,69.9 289.6,72.8 290.3,71.9 291.1,70.7 291.8,73.1 292.5,71.2 293.3,73.8 294.0,71.4 294.7,69.1 295.5,69.0 296.2,69.9 296.9,70.1 297.7,72.0 298.4,66.3 299.1,68.5 299.8,67.3 300.6,70.6 301.3,69.3 302.0,69.4 302.8,62.3 303.5,59.3 304.2,61.5 305.0,56.6 305.7,55.5 306.4,59.6 307.2,59.8 307.9,58.5 308.6,57.8 309.4,59.2 310.1,56.8 310.8,56.5 311.5,55.9 312.3,55.8 313.0,54.5 313.7,55.1 314.5,59.5 315.2,58.2 315.9,59.2 316.7,59.4 317.4,57.7 318.1,57.7 318.9,56.9 319.6,60.6 320.3,60.1 321.1,58.1 321.8,58.5 322.5,58.8 323.2,58.5 324.0,59.5 324.7,56.8 325.4,57.2 326.2,57.8 326.9,58.6 327.6,57.5 328.4,61.7 329.1,58.5 329.8,56.6 330.6,59.1 331.3,55.9 332.0,55.8 332.8,58.3 333.5,56.1 334.2,55.9 334.9,54.2 335.7,53.7 336.4,54.5 337.1,55.5 337.9,54.0 338.6,53.6 339.3,51.9 340.1,52.3 340.8,54.4 341.5,56.2 342.3,55.2 343.0,56.5 343.7,57.8 344.5,57.5 345.2,59.5 345.9,59.9 346.6,60.6 347.4,63.6 348.1,58.9 348.8,62.8 349.6,59.7 350.3,60.7 351.0,58.4 351.8,63.7 352.5,60.3 353.2,58.4 354.0,57.6 354.7,54.4 355.4,57.7 356.2,55.8 356.9,56.5 357.6,56.0 358.3,56.6 359.1,57.6 359.8,56.2 360.5,58.8 361.3,54.7 362.0,58.3 362.7,55.9 363.5,52.5 364.2,56.4 364.9,55.8 365.7,53.7 366.4,55.5 367.1,56.7 367.9,54.7 368.6,54.0 369.3,53.6 370.1,56.0 370.8,51.5 371.5,51.5 372.2,54.1"/>
<polyline fill="none" stroke="#ff8cf8" stroke-width="0.5" stroke-linejoin="round" points="1.5,65.1 2.2,72.6 3.0,74.2 3.7,75.1 4.4,81.6 5.2,79.5 5.9,79.9 6.6,81.7 7.4,79.5 8.1,80.6 8.8,83.1 9.5,79.2 10.3,79.6 11.0,79.2 11.7,78.4 12.5,80.4 13.2,80.9 13.9,83.4 14.7,80.2 15.4,82.4 16.1,82.3 16.9,83.1 17.6,82.0 18.3,80.7 19.0,77.0 19.8,82.2 20.5,80.6 21.2,77.3 22.0,75.0 22.7,76.3 23.4,80.4 24.2,81.2 24.9,76.1 25.6,77.8 26.4,78.5 27.1,75.1 27.8,75.0 28.6,76.8 29.3,76.8 30.0,76.7 30.8,74.8 31.5,76.7 32.2,77.0 32.9,77.1 33.7,80.9 34.4,76.2 35.1,76.9 35.9,77.7 36.6,81.9 37.3,79.5 38.1,76.8 38.8,81.3 39.5,78.4 40.3,76.2 41.0,80.1 41.7,74.9 42.5,76.6 43.2,77.7 43.9,76.8 44.6,76.1 45.4,76.9 46.1,73.6 46.8,75.1 47.6,73.1 48.3,69.1 49.0,71.9 49.8,74.5 50.5,72.4 51.2,72.6 52.0,76.6 52.7,78.3 53.4,76.2 54.2,76.3 54.9,76.6 55.6,73.7 56.3,78.0 57.1,74.1 57.8,78.5 58.5,77.7 59.3,75.3 60.0,74.5 60.7,75.0 61.5,75.8 62.2,76.2 62.9,76.1 63.7,75.4 64.4,76.6 65.1,75.8 65.9,75.3 66.6,76.3 67.3,74.9 68.0,75.3 68.8,72.8 69.5,75.6 70.2,76.9 71.0,73.9 71.7,64.6 72.4,63.1 73.2,65.3 73.9,64.2 74.6,61.8 75.4,69.4 76.1,67.0 76.8,64.8 77.6,64.2 78.3,64.0 79.0,64.7 79.7,62.4 80.5,62.6 81.2,63.5 81.9,57.9 82.7,61.0 83.4,62.1 84.1,60.9 84.9,61.1 85.6,61.0 86.3,65.9 87.1,62.2 87.8,59.9 88.5,63.9 89.3,62.2 90.0,61.2 90.7,62.0 91.4,61.6 92.2,67.8 92.9,66.2 93.6,66.9 94.4,65.8 95.1,65.3 95.8,72.0 96.6,65.8 97.3,70.4 98.0,67.0 98.8,71.0 99.5,68.4 100.2,66.9 100.9,69.5 101.7,69.1 102.4,68.3 103.1,69.7 103.9,70.4 104.6,67.9 105.3,69.0 106.1,71.6 106.8,66.6 107.5,73.6 108.3,70.3 109.0,72.7 109.7,72.2 110.5,71.5 111.2,72.7 111.9,72.2 112.6,76.2 113.4,76.5 114.1,73.1 114.8,76.1 115.6,76.5 116.3,77.5 117.0,73.1 117.8,74.3 118.5,73.3 119.2,77.7 120.0,76.4 120.7,78.7 121.4,75.7 122.2,74.5 122.9,79.1 123.6,75.1 124.3,76.1 125.1,78.1 125.8,81.3 126.5,75.5 127.3,78.1 128.0,79.1 128.7,77.4 129.5,77.4 130.2,75.6 130.9,80.0 131.7,76.3 132.4,75.7 133.1,75.9 133.9,78.6 134.6,79.4 135.3,76.3 136.0,77.8 136.8,77.7 137.5,75.3 138.2,78.1 139.0,81.5 139.7,78.2 140.4,80.6 141.2,75.9 141.9,76.7 142.6,78.2 143.4,76.9 144.1,75.1 144.8,76.1 145.6,73.6 146.3,75.7 147.0,73.5 147.7,72.3 148.5,71.8 149.2,75.4 149.9,72.4 150.7,76.8 151.4,75.1 152.1,76.3 152.9,71.1 153.6,75.6 154.3,74.1 155.1,74.9 155.8,75.2 156.5,76.7 157.3,75.9 158.0,73.4 158.7,76.5 159.4,75.7 160.2,75.0 160.9,77.1 161.6,79.0 162.4,77.8 163.1,75.1 163.8,79.8 164.6,78.1 165.3,75.4 166.0,75.8 166.8,77.3 167.5,75.9 168.2,77.1 169.0,79.5 169.7,80.2 170.4,78.7 171.1,76.1 171.9,78.7 172.6,79.3 173.3,79.2 174.1,80.6 174.8,78.2 175.5,80.1 176.3,77.5 177.0,82.3 177.7,77.8 178.5,79.5 179.2,81.8 179.9,77.3 180.7,79.1 181.4,82.5 182.1,80.3 182.8,78.4 183.6,79.7 184.3,77.7 185.0,77.8 185.8,78.0 186.5,78.7 187.2,77.0 188.0,78.1 188.7,78.4 189.4,82.8 190.2,77.6 190.9,76.9 191.6,79.6 192.4,79.9 193.1,75.7 193.8,82.1 194.5,78.2 195.3,74.8 196.0,80.6 196.7,77.6 197.5,75.1 198.2,78.1 198.9,76.4 199.7,75.4 200.4,78.0 201.1,76.2 201.9,75.4 202.6,74.5 203.3,76.1 204.1,76.4 204.8,77.9 205.5,76.8 206.2,74.7 207.0,76.2 207.7,77.9 208.4,77.9 209.2,71.9 209.9,74.6 210.6,75.5 211.4,81.2 212.1,75.7 212.8,76.0 213.6,74.0 214.3,76.2 215.0,77.1 215.8,76.2 216.5,80.4 217.2,75.2 217.9,76.4 218.7,78.1 219.4,74.5 220.1,73.6 220.9,79.1 221.6,77.8 222.3,76.1 223.1,76.2 223.8,77.1 224.5,78.0 225.3,72.7 226.0,74.5 226.7,78.2 227.5,78.4 228.2,73.1 228.9,74.3 229.6,72.8 230.4,74.5 231.1,77.1 231.8,74.8 232.6,78.6 233.3,75.9 234.0,74.3 234.8,73.0 235.5,74.8 236.2,73.4 237.0,72.1 237.7,71.9 238.4,71.6 239.2,72.7 239.9,74.1 240.6,72.5 241.3,74.2 242.1,76.1 242.8,76.2 243.5,75.5 244.3,76.1 245.0,76.1 245.7,76.5 246.5,76.2 247.2,76.8 247.9,78.7 248.7,75.9 249.4,74.8 250.1,75.9 250.9,77.0 251.6,75.9 252.3,78.4 253.0,80.0 253.8,76.6 254.5,78.4 255.2,75.5 256.0,78.7 256.7,81.4 257.4,78.7 258.2,74.2 258.9,77.6 259.6,79.3 260.4,78.3 261.1,76.1 261.8,76.2 262.6,76.7 263.3,74.5 264.0,75.9 264.7,77.1 265.5,76.0 266.2,74.1 266.9,75.1 267.7,75.0 268.4,78.5 269.1,76.8 269.9,75.2 270.6,76.9 271.3,74.4 272.1,75.1 272.8,74.5 273.5,76.3 274.3,71.5 275.0,73.7 275.7,76.1 276.4,75.4 277.2,71.0 277.9,76.0 278.6,73.8 279.4,73.5 280.1,74.8 280.8,76.5 281.6,73.8 282.3,73.1 283.0,71.4 283.8,71.6 284.5,72.6 285.2,70.8 286.0,70.9 286.7,71.1 287.4,71.3 288.1,71.6 288.9,69.9 289.6,72.8 290.3,71.9 291.1,70.7 291.8,73.1 292.5,71.2 293.3,73.8 294.0,71.4 294.7,69.1 295.5,69.0 296.2,69.9 296.9,70.1 297.7,72.0 298.4,66.3 299.1,68.5 299.8,67.3 300.6,70.6 301.3,69.3 302.0,69.4 302.8,62.3 303.5,59.3 304.2,61.5 305.0,56.6 305.7,55.5 306.4,59.6 307.2,59.8 307.9,58.5 308.6,57.8 309.4,59.2 310.1,56.8 310.8,56.5 311.5,55.9 312.3,55.8 313.0,54.5 313.7,55.1 314.5,59.5 315.2,58.2 315.9,59.2 316.7,59.4 317.4,57.7 318.1,57.7 318.9,56.9 319.6,60.6 320.3,60.1 321.1,58.1 321.8,58.5 322.5,58.8 323.2,58.5 324.0,59.5 324.7,56.8 325.4,57.2 326.2,57.8 326.9,58.6 327.6,57.5 328.4,61.7 329.1,58.5 329.8,56.6 330.6,59.1 331.3,55.9 332.0,55.8 332.8,58.3 333.5,56.1 334.2,55.9 334.9,54.2 335.7,53.7 336.4,54.5 337.1,55.5 337.9,54.0 338.6,53.6 339.3,51.9 340.1,52.3 340.8,54.4 341.5,56.2 342.3,55.2 343.0,56.5 343.7,57.8 344.5,57.5 345.2,59.5 345.9,59.9 346.6,60.6 347.4,63.6 348.1,58.9 348.8,62.8 349.6,59.7 350.3,60.7 351.0,58.4 351.8,63.7 352.5,60.3 353.2,58.4 354.0,57.6 354.7,54.4 355.4,57.7 356.2,55.8 356.9,56.5 357.6,56.0 358.3,56.6 359.1,57.6 359.8,56.2 360.5,58.8 361.3,54.7 362.0,58.3 362.7,55.9 363.5,52.5 364.2,56.4 364.9,55.8 365.7,53.7 366.4,55.5 367.1,56.7 367.9,54.7 368.6,54.0 369.3,53.6 370.1,56.0 370.8,51.5 371.5,51.5 372.2,54.1"/>
<line x1="374.4" y1="0" x2="374.4" y2="127.40000000000003" stroke="#c8c8c8" stroke-width="1.6"/>
<rect x="0" y="0" width="391.5" height="1.3" fill="#000008"/><rect x="0" y="0" width="1.5" height="127.40000000000003" fill="#000008"/><rect x="0" y="126.60000000000004" width="391.5" height="0.8" fill="#000010"/><rect x="390.7" y="0" width="0.8" height="127.40000000000003" fill="#000040"/>
</svg>
<!-- ticks -->
<svg class="abs" style="left:0;top:0;pointer-events:none" width="600" height="494" viewBox="0 0 600 494">
<line x1="41.5" y1="130.7" x2="43" y2="130.7" stroke="#0000a0" stroke-width="1.2"/>
<line x1="41.5" y1="155.3" x2="43" y2="155.3" stroke="#0000a0" stroke-width="1.2"/>
<line x1="41.5" y1="179.8" x2="43" y2="179.8" stroke="#0000a0" stroke-width="1.2"/>
<line x1="41.5" y1="204.4" x2="43" y2="204.4" stroke="#0000a0" stroke-width="1.2"/>
<line x1="41.5" y1="228.9" x2="43" y2="228.9" stroke="#0000a0" stroke-width="1.2"/>
<line x1="434.5" y1="133.5" x2="438" y2="133.5" stroke="#101060" stroke-width="1.1"/>
<line x1="434.5" y1="153.5" x2="438" y2="153.5" stroke="#101060" stroke-width="1.1"/>
<line x1="434.5" y1="173.5" x2="438" y2="173.5" stroke="#101060" stroke-width="1.1"/>
<line x1="434.5" y1="193.5" x2="438" y2="193.5" stroke="#101060" stroke-width="1.1"/>
<line x1="434.5" y1="213.5" x2="438" y2="213.5" stroke="#101060" stroke-width="1.1"/>
<line x1="434.5" y1="233.5" x2="438" y2="233.5" stroke="#101060" stroke-width="1.1"/>
<line x1="41.5" y1="280.3" x2="43" y2="280.3" stroke="#0000a0" stroke-width="1.2"/>
<line x1="41.5" y1="305.3" x2="43" y2="305.3" stroke="#0000a0" stroke-width="1.2"/>
<line x1="41.5" y1="330.3" x2="43" y2="330.3" stroke="#0000a0" stroke-width="1.2"/>
<line x1="41.5" y1="355.3" x2="43" y2="355.3" stroke="#0000a0" stroke-width="1.2"/>
<line x1="41.5" y1="380.3" x2="43" y2="380.3" stroke="#0000a0" stroke-width="1.2"/>
</svg>
<!-- chart1 left labels -->
<div class="al" style="left:8px;top:123px">1000</div>
<div class="al" style="left:8px;top:148px">800</div>
<div class="al" style="left:8px;top:173px">600</div>
<div class="al" style="left:8px;top:198px">400</div>
<div class="al" style="left:8px;top:223px">200</div>
<div class="ar" style="left:439.5px;top:129px">48</div>
<div class="ar" style="left:439.5px;top:149px">40</div>
<div class="ar" style="left:439.5px;top:169px">32</div>
<div class="ar" style="left:439.5px;top:189px">24</div>
<div class="ar" style="left:439.5px;top:209px">16</div>
<div class="ar" style="left:439.5px;top:228px">8</div>
<div class="ax" style="left:37.5px;top:257px">0</div>
<div class="ax" style="left:85.5px;top:257px">10</div>
<div class="ax" style="left:134.5px;top:257px">20</div>
<div class="ax" style="left:183.5px;top:257px">30</div>
<div class="ax" style="left:231.5px;top:257px">40</div>
<div class="ax" style="left:280.5px;top:257px">50</div>
<div class="ax" style="left:329.5px;top:257px">60</div>
<div class="ax" style="left:377.5px;top:257px">70</div>
<div class="ax" style="left:426.5px;top:257px">80</div>
<!-- chart2 labels -->
<div class="al" style="left:8px;top:273px">500</div>
<div class="al" style="left:8px;top:298px">400</div>
<div class="al" style="left:8px;top:323px">300</div>
<div class="al" style="left:8px;top:348px">200</div>
<div class="al" style="left:8px;top:373px">100</div>
<div class="ar" style="left:438px;top:273px">40</div>
<div class="ar" style="left:438px;top:298px">32</div>
<div class="ar" style="left:438px;top:323px">24</div>
<div class="ar" style="left:438px;top:348px">16</div>
<div class="ar" style="left:438px;top:373px">8</div>
<div class="ax" style="left:37.5px;top:408px">0</div>
<div class="ax" style="left:85.5px;top:408px">10</div>
<div class="ax" style="left:134.5px;top:408px">20</div>
<div class="ax" style="left:183.5px;top:408px">30</div>
<div class="ax" style="left:231.5px;top:408px">40</div>
<div class="ax" style="left:280.5px;top:408px">50</div>
<div class="ax" style="left:329.5px;top:408px">60</div>
<div class="ax" style="left:377.5px;top:408px">70</div>
<div class="ax" style="left:426.5px;top:408px">80</div>

<!-- right panel -->
<div class="grp" style="left:457px;top:123px;width:130px;height:78px"></div>
<div class="gt" style="left:463px;top:117.5px">Disk-Info</div>
<div class="t" style="left:465px;top:132px">Typ:</div><div class="t v" style="left:507px;top:132px">Audio CD</div>
<div class="t" style="left:465px;top:148px">ID:</div><div class="t v" style="left:507px;top:148px">Ritek</div>
<div class="t" style="left:465px;top:164px">Datum:</div><div class="t" style="left:507px;top:164px">-</div>
<div class="t" style="left:465px;top:180px">Label:</div><div class="t" style="left:507px;top:180px">-</div>

<div class="grp" style="left:457px;top:208px;width:130px;height:190px"></div>
<div class="gt" style="left:463px;top:202.5px;letter-spacing:-0.2px">Einstellungen</div>
<div class="combo" style="left:465px;top:217px;width:78px;height:19px"><div class="t" style="left:4px;top:3px">12 X</div><div class="dd"></div></div>
<div class="tbbtn" style="left:550.5px;top:216.5px;width:21.5px;height:20px;border-width:1px 1.5px 1.5px 1px;border-color:#fdfdfd #6c6c6c #6c6c6c #fdfdfd;border-radius:0;background:#f3f3f2"><svg class="abs" style="left:2.5px;top:1px" width="14" height="15.5" viewBox="0 0 14 15"><rect x="0.6" y="0.6" width="12.8" height="13.8" fill="#f1faf1" stroke="#1a1e1a" stroke-width="1.2"/><path d="M4 6 A3.2 3.2 0 0 1 10 5.5 M10 9 A3.2 3.2 0 0 1 4 9.5" stroke="#1a8a1a" stroke-width="1.6" fill="none"/><path d="M9 3l2.5 3l-3.5 0.5z M5 12l-2.5-3l3.5-0.5z" fill="#1a8a1a"/></svg></div>
<div class="t" style="left:467px;top:245px">Start:</div>
<div class="edit" style="left:515px;top:241px;width:56px;height:19px">000:00.00</div>
<div class="t" style="left:467px;top:266px">Ende:</div>
<div class="edit" style="left:515px;top:262px;width:56px;height:19px">076:34.72</div>
<div class="cb" style="left:466.7px;top:283px"></div><div class="t" style="left:481.5px;letter-spacing:0.03px;top:283px">Schnelles Scannen</div>
<div class="cb on" style="left:466.7px;top:300px"></div><div class="t" style="left:481.5px;letter-spacing:0.03px;top:300px">C1/PIE anzeigen</div>
<div class="cb on" style="left:466.7px;top:314px"></div><div class="t" style="left:481.5px;letter-spacing:0.03px;top:314px">C2/PIF anzeigen</div>
<div class="cb on" style="left:466.7px;top:329px"></div><div class="t" style="left:481.5px;letter-spacing:-0.1px;top:328.5px">Jitter anzeigen</div>
<div class="cb on" style="left:466.7px;top:343px"></div><div class="t" style="left:481.5px;letter-spacing:0.03px;top:343px">Zeige Lesegeschw.</div>
<div class="cb on dis" style="left:466.7px;top:358px"></div><div class="t" style="left:481.5px;letter-spacing:0.03px;top:357px;color:#bdbec6">Zeige Schreibgeschw.</div>
<div class="tbbtn" style="left:512px;top:374px;width:69px;height:21px">Erweitert</div>

<div class="grp" style="left:457px;top:403px;width:130px;height:25px"></div>
<div class="t" style="left:466.5px;top:410px">Qualitätsindex:</div><div class="t v r" style="left:537px;top:410px;width:40px">0</div>
<div class="grp" style="left:457px;top:433px;width:130px;height:52px"></div>
<div class="t" style="left:467px;top:441px">Fortschritt:</div><div class="t v r" style="left:517px;top:441px;width:60px">100 %</div>
<div class="t" style="left:467px;top:456px">Position:</div><div class="t v r" style="left:517px;top:456px;width:60px">76:32.00</div>
<div class="t" style="left:467px;top:470px">Geschwindigkeit:</div><div class="t v r" style="left:517px;top:470px;width:60px">11.84 X</div>

<!-- bottom groups -->
<div class="grp" style="left:13px;top:433px;width:135px;height:53px;border-radius:0;border-color:#b8b8b0"></div>
<div class="gt" style="left:19px;top:427px;color:#111;padding-left:13px;letter-spacing:-0.3px">C1 Fehler</div><div class="sq" style="left:22px;top:430px;background:#00e8e8"></div>
<div class="t" style="left:20.5px;top:442.6px">Durchschnitt</div><div class="t v r" style="left:80px;top:442.6px;width:60px">116.94</div>
<div class="t" style="left:20.5px;top:456.6px">Maximum:</div><div class="t v r" style="left:80px;top:456.6px;width:60px">765</div>
<div class="t" style="left:20.5px;top:470.5px">Gesamt:</div><div class="t v r" style="left:80px;top:470.5px;width:60px">536974</div>

<div class="grp" style="left:160px;top:433px;width:136px;height:53px;border-radius:0;border-color:#b8b8b0"></div>
<div class="gt" style="left:166px;top:427px;color:#111;padding-left:13px;letter-spacing:-0.3px">C2 Fehler</div><div class="sq" style="left:169px;top:430px;background:#f0f000"></div>
<div class="t" style="left:167.5px;top:442.6px">Durchschnitt</div><div class="t v r" style="left:227px;top:442.6px;width:60px">1.61</div>
<div class="t" style="left:167.5px;top:456.6px">Maximum:</div><div class="t v r" style="left:227px;top:456.6px;width:60px">304</div>
<div class="t" style="left:167.5px;top:470.5px">Gesamt:</div><div class="t v r" style="left:227px;top:470.5px;width:60px">7386</div>

<div class="grp" style="left:308px;top:433px;width:135px;height:39px;border-radius:0;border-color:#b8b8b0"></div>
<div class="gt" style="left:314px;top:427px;color:#111;padding-left:13px;letter-spacing:-0.3px">Jitter</div><div class="sq" style="left:317px;top:430px;background:#e000e0"></div>
<div class="t" style="left:315.5px;top:442.6px">Durchschnitt</div><div class="t v r" style="left:375px;top:442.6px;width:60px">16.94 %</div>
<div class="t" style="left:315.5px;top:456.6px">Maximum:</div><div class="t v r" style="left:375px;top:456.6px;width:60px">24.7 %</div>
</div></div>
</body></html>
